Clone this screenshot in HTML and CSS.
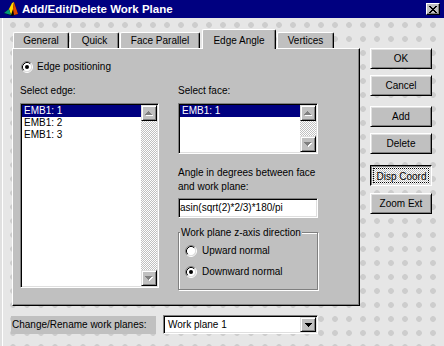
FILE: index.html
```html
<!DOCTYPE html>
<html>
<head>
<meta charset="utf-8">
<title>Add/Edit/Delete Work Plane</title>
<link rel="stylesheet" href="styles.css">
</head>
<body>
<div class="window">
  <div class="titlebar">
    <svg class="app-icon" width="16" height="16" viewBox="0 0 16 16">
      <path d="M1 12 L6 8 L9 2 L11 1 L13 7 L15 13 L9 15 Z" fill="#000"/>
      <path d="M6 8 L9 2 L11 1 L10 8 L8 14 Z" fill="#ffd800"/>
      <path d="M10 8 L11 1 L13 7 L15 13 L11 14 Z" fill="#e04800"/>
      <path d="M1 12 L6 8 L8 14 Z" fill="#009878"/>
    </svg>
    <span class="title">Add/Edit/Delete Work Plane</span>
    <span class="close">
      <svg width="8" height="7" viewBox="0 0 8 7" shape-rendering="crispEdges">
        <path d="M0 0h2v1h-2z M6 0h2v1h-2z M1 1h2v1h-2z M5 1h2v1h-2z M2 2h4v1h-4z M3 3h2v1h-2z M2 4h4v1h-4z M1 5h2v1h-2z M5 5h2v1h-2z M0 6h2v1h-2z M6 6h2v1h-2z" fill="#000"/>
      </svg>
    </span>
  </div>
  <div class="client">
    <div class="main">
      <div class="tabs">
        <div class="tab tab-general">General</div>
        <div class="tab tab-quick">Quick</div>
        <div class="tab tab-face">Face Parallel</div>
        <div class="tab tab-edge selected">Edge Angle</div>
        <div class="tab tab-vert">Vertices</div>
      </div>
      <div class="panel">
        <div class="radio-row first-radio">
          <svg class="radio" width="12" height="12" viewBox="0 0 12 12">
            <circle cx="6" cy="6" r="4.5" fill="#fff"/>
            <path d="M9.89 2.11 A5.5 5.5 0 0 0 2.11 9.89" stroke="#808080" fill="none"/>
            <path d="M2.11 9.89 A5.5 5.5 0 0 0 9.89 2.11" stroke="#fff" fill="none"/>
            <path d="M9.18 2.82 A4.5 4.5 0 0 0 2.82 9.18" stroke="#000" fill="none"/>
            <path d="M2.82 9.18 A4.5 4.5 0 0 0 9.18 2.82" stroke="#dfdfdf" fill="none"/>
            <circle cx="6" cy="6" r="2" fill="#000"/>
          </svg>
          <span>Edge positioning</span>
        </div>
        <div class="cols">
          <div class="col-left">
            <div class="lbl">Select edge:</div>
            <div class="listbox edge-list">
              <div class="items">
                <div class="item sel">EMB1: 1</div>
                <div class="item">EMB1: 2</div>
                <div class="item">EMB1: 3</div>
              </div>
              <div class="vscroll">
                <div class="sbtn">
                  <svg width="8" height="5" viewBox="0 0 8 5" shape-rendering="crispEdges">
                    <path d="M4 1h1v1h1v1h1v1h1v1H1V4h1V3h1V2h1z" fill="#fff"/>
                    <path d="M3 0h1v1h1v1h1v1h1v1H0V3h1V2h1V1h1z" fill="#808080"/>
                  </svg>
                </div>
                <div class="track"></div>
                <div class="sbtn">
                  <svg width="8" height="5" viewBox="0 0 8 5" shape-rendering="crispEdges">
                    <path d="M1 1h7v1h-1v1h-1v1h-1v1h-1v-1h-1v-1h-1v-1H1z" fill="#fff"/>
                    <path d="M0 0h7v1h-1v1h-1v1h-1v1h-1v-1h-1v-1h-1v-1H0z" fill="#808080"/>
                  </svg>
                </div>
              </div>
            </div>
          </div>
          <div class="col-right">
            <div class="lbl">Select face:</div>
            <div class="listbox face-list">
              <div class="items">
                <div class="item sel">EMB1: 1</div>
              </div>
              <div class="vscroll">
                <div class="sbtn">
                  <svg width="8" height="5" viewBox="0 0 8 5" shape-rendering="crispEdges">
                    <path d="M4 1h1v1h1v1h1v1h1v1H1V4h1V3h1V2h1z" fill="#fff"/>
                    <path d="M3 0h1v1h1v1h1v1h1v1H0V3h1V2h1V1h1z" fill="#808080"/>
                  </svg>
                </div>
                <div class="track"></div>
                <div class="sbtn">
                  <svg width="8" height="5" viewBox="0 0 8 5" shape-rendering="crispEdges">
                    <path d="M1 1h7v1h-1v1h-1v1h-1v1h-1v-1h-1v-1h-1v-1H1z" fill="#fff"/>
                    <path d="M0 0h7v1h-1v1h-1v1h-1v1h-1v-1h-1v-1h-1v-1H0z" fill="#808080"/>
                  </svg>
                </div>
              </div>
            </div>
            <div class="angle-lbl">Angle in degrees between face<br>and work plane:</div>
            <div class="textbox">asin(sqrt(2)*2/3)*180/pi</div>
            <fieldset class="group">
              <legend>Work plane z-axis direction</legend>
              <div class="radio-row">
                <svg class="radio" width="12" height="12" viewBox="0 0 12 12">
                  <circle cx="6" cy="6" r="4.5" fill="#fff"/>
                  <path d="M9.89 2.11 A5.5 5.5 0 0 0 2.11 9.89" stroke="#808080" fill="none"/>
                  <path d="M2.11 9.89 A5.5 5.5 0 0 0 9.89 2.11" stroke="#fff" fill="none"/>
                  <path d="M9.18 2.82 A4.5 4.5 0 0 0 2.82 9.18" stroke="#000" fill="none"/>
                  <path d="M2.82 9.18 A4.5 4.5 0 0 0 9.18 2.82" stroke="#dfdfdf" fill="none"/>
                </svg>
                <span>Upward normal</span>
              </div>
              <div class="radio-row second">
                <svg class="radio" width="12" height="12" viewBox="0 0 12 12">
                  <circle cx="6" cy="6" r="4.5" fill="#fff"/>
                  <path d="M9.89 2.11 A5.5 5.5 0 0 0 2.11 9.89" stroke="#808080" fill="none"/>
                  <path d="M2.11 9.89 A5.5 5.5 0 0 0 9.89 2.11" stroke="#fff" fill="none"/>
                  <path d="M9.18 2.82 A4.5 4.5 0 0 0 2.82 9.18" stroke="#000" fill="none"/>
                  <path d="M2.82 9.18 A4.5 4.5 0 0 0 9.18 2.82" stroke="#dfdfdf" fill="none"/>
                  <circle cx="6" cy="6" r="2" fill="#000"/>
                </svg>
                <span>Downward normal</span>
              </div>
            </fieldset>
          </div>
        </div>
      </div>
      <div class="bottom">
        <span class="combo-label">Change/Rename work planes:</span>
        <div class="combo">
          <span class="combo-text">Work plane 1</span>
          <span class="sbtn combo-btn">
            <svg width="7" height="4" viewBox="0 0 7 4" shape-rendering="crispEdges">
              <path d="M0 0h7v1h-1v1h-1v1h-1v1h-1v-1h-1v-1h-1v-1H0z" fill="#000"/>
            </svg>
          </span>
        </div>
      </div>
    </div>
    <div class="buttons">
      <div class="btn b-ok">OK</div>
      <div class="btn b-cancel">Cancel</div>
      <div class="btn b-add">Add</div>
      <div class="btn b-delete">Delete</div>
      <div class="btn b-disp pressed"><span class="focus">Disp Coord</span></div>
      <div class="btn b-zoom">Zoom Ext</div>
    </div>
  </div>
</div>
</body>
</html>
```
FILE: styles.css
```css
* { box-sizing: border-box; }
html, body { margin: 0; padding: 0; }
body {
  width: 444px;
  height: 346px;
  overflow: hidden;
  font: 10px/13px "Liberation Sans", Arial, sans-serif;
  color: #000;
  background: #e4e4e4;
}
.window {
  width: 444px;
  height: 346px;
  display: flex;
  flex-direction: column;
}
.titlebar {
  height: 18px;
  flex: none;
  background: #000080;
  display: flex;
  align-items: center;
  padding: 0 4px 0 3px;
}
.app-icon { display: block; flex: none; }
.title {
  color: #fff;
  font-weight: bold;
  font-size: 11.5px;
  line-height: 18px;
  margin-left: 3px;
  white-space: nowrap;
}
.close {
  margin-left: auto;
  width: 14px;
  height: 12px;
  background: #c0c0c0;
  border: 1px solid;
  border-color: #fff #000 #000 #fff;
  box-shadow: inset -1px -1px #808080;
  display: flex;
  align-items: center;
  justify-content: center;
}
.close svg { display: block; }

.client {
  flex: 1;
  display: flex;
  align-items: flex-start;
  padding: 11px 0 0 12px;
  background-color: #e6e6e6;
  background-image: radial-gradient(circle, #cdcdcd 0 2.5px, transparent 3.2px);
  background-size: 14px 14px;
  background-position: 6px 0;
  box-shadow: inset 2px 0 #e0e0e0, inset 3px 0 #fff;
}
.main {
  width: 348px;
  display: flex;
  flex-direction: column;
}

/* Tabs */
.tabs {
  display: flex;
  align-items: flex-end;
  height: 20px;
  margin-bottom: -1px;
  padding-left: 1px;
}
.tab {
  height: 17px;
  background: #c0c0c0;
  border: 1px solid;
  border-color: #fff #000 #c0c0c0 #fff;
  border-bottom-width: 0;
  border-radius: 2px 2px 0 0;
  box-shadow: inset -1px 0 #808080;
  padding-top: 1px;
  text-align: center;
  line-height: 13px;
  white-space: nowrap;
}
.tab.selected {
  position: relative;
  z-index: 1;
  height: 20px;
  padding-top: 4px;
}
.tab-general { width: 56px; }
.tab-quick { width: 49px; margin-left: 1px; }
.tab-face { width: 80px; margin-left: 1px; }
.tab-edge { width: 74px; margin-left: 2px; }
.tab-vert { width: 57px; margin-left: 1px; }

/* Panel */
.panel {
  position: relative;
  height: 258px;
  background: #c0c0c0;
  border: 1px solid;
  border-color: #fff #000 #000 #fff;
  box-shadow: inset -1px -1px #808080;
  padding: 11px 0 0 7px;
}
.radio-row {
  display: flex;
  align-items: center;
  height: 13px;
  gap: 5px;
  white-space: nowrap;
}
.radio { display: block; flex: none; }
.first-radio { margin-left: 1px; gap: 4px; }
.cols {
  display: flex;
  gap: 19px;
  margin-top: 11px;
}
.col-left { width: 139px; }
.col-right { width: 140px; }
.lbl { height: 13px; margin-bottom: 6px; }

.listbox {
  display: flex;
  background: #fff;
  border: 1px solid;
  border-color: #808080 #fff #fff #808080;
  box-shadow: inset 1px 1px #000, inset -1px -1px #dfdfdf;
  padding: 1px;
}
.edge-list { height: 185px; }
.face-list { height: 51px; }
.items {
  flex: 1;
  display: flex;
  flex-direction: column;
}
.item {
  height: 12px;
  line-height: 12px;
  padding-left: 2px;
  white-space: nowrap;
}
.item.sel { background: #000080; color: #fff; }
.vscroll {
  width: 16px;
  display: flex;
  flex-direction: column;
}
.track {
  flex: 1;
  background: repeating-conic-gradient(#c0c0c0 0 25%, #fff 0 50%) 0 0 / 2px 2px;
}
.sbtn {
  height: 16px;
  flex: none;
  background: #c0c0c0;
  border: 1px solid;
  border-color: #dfdfdf #000 #000 #dfdfdf;
  box-shadow: inset 1px 1px #fff, inset -1px -1px #808080;
  display: flex;
  align-items: center;
  justify-content: center;
}
.sbtn svg { display: block; }

.angle-lbl {
  margin-top: 12px;
  line-height: 14px;
  white-space: nowrap;
}
.textbox {
  margin-top: 4px;
  height: 20px;
  background: #fff;
  border: 1px solid;
  border-color: #808080 #fff #fff #808080;
  box-shadow: inset 1px 1px #000, inset -1px -1px #dfdfdf;
  padding: 2px 0 0 1px;
  white-space: nowrap;
}
.group {
  margin: 8px 0 0 0;
  padding: 5px 0 11px 6px;
  border: 1px solid #808080;
  box-shadow: 1px 1px 0 #fff, inset 1px 1px 0 #fff;
  min-width: 0;
}
.group legend {
  padding: 0 1px;
  margin-left: -5px;
  line-height: 13px;
  background: #c0c0c0;
  white-space: nowrap;
}
.group .second { margin-top: 8px; }

/* Bottom row */
.bottom {
  display: flex;
  align-items: flex-start;
  margin-top: 9px;
  margin-left: -1px;
}
.combo-label {
  margin-top: 1px;
  width: 145px;
  height: 18px;
  line-height: 18px;
  padding-left: 1px;
  background: #c0c0c0;
  white-space: nowrap;
}
.combo {
  margin-left: 7px;
  width: 155px;
  height: 19px;
  background: #fff;
  border: 1px solid;
  border-color: #808080 #fff #fff #808080;
  box-shadow: inset 1px 1px #000, inset -1px -1px #dfdfdf;
  padding: 1px;
  display: flex;
}
.combo-text {
  flex: 1;
  padding-left: 3px;
  line-height: 15px;
  white-space: nowrap;
}
.combo-btn { width: 16px; height: 15px; }

/* Buttons */
.buttons {
  width: 62px;
  margin-left: 10px;
  margin-top: 19px;
  display: flex;
  flex-direction: column;
}
.btn {
  height: 21px;
  background: #c0c0c0;
  border: 1px solid;
  border-color: #fff #000 #000 #fff;
  box-shadow: inset 1px 1px #dfdfdf, inset -1px -1px #808080;
  display: flex;
  align-items: center;
  justify-content: center;
  white-space: nowrap;
}
.b-cancel { margin-top: 6px; }
.b-add { margin-top: 10px; }
.b-delete { margin-top: 6px; }
.b-disp { margin-top: 11px; }
.b-zoom { margin-top: 7px; }
.btn.pressed {
  border-color: #000 #fff #fff #000;
  box-shadow: inset 1px 1px #808080, inset -1px -1px #dfdfdf;
  background: repeating-conic-gradient(#c0c0c0 0 25%, #fff 0 50%) 0 0 / 2px 2px;
  padding: 2px;
  align-items: stretch;
}
.focus {
  flex: 1;
  border: 1px dotted #000;
  display: flex;
  align-items: center;
  justify-content: center;
  padding-top: 1px;
  padding-left: 1px;
}
```
